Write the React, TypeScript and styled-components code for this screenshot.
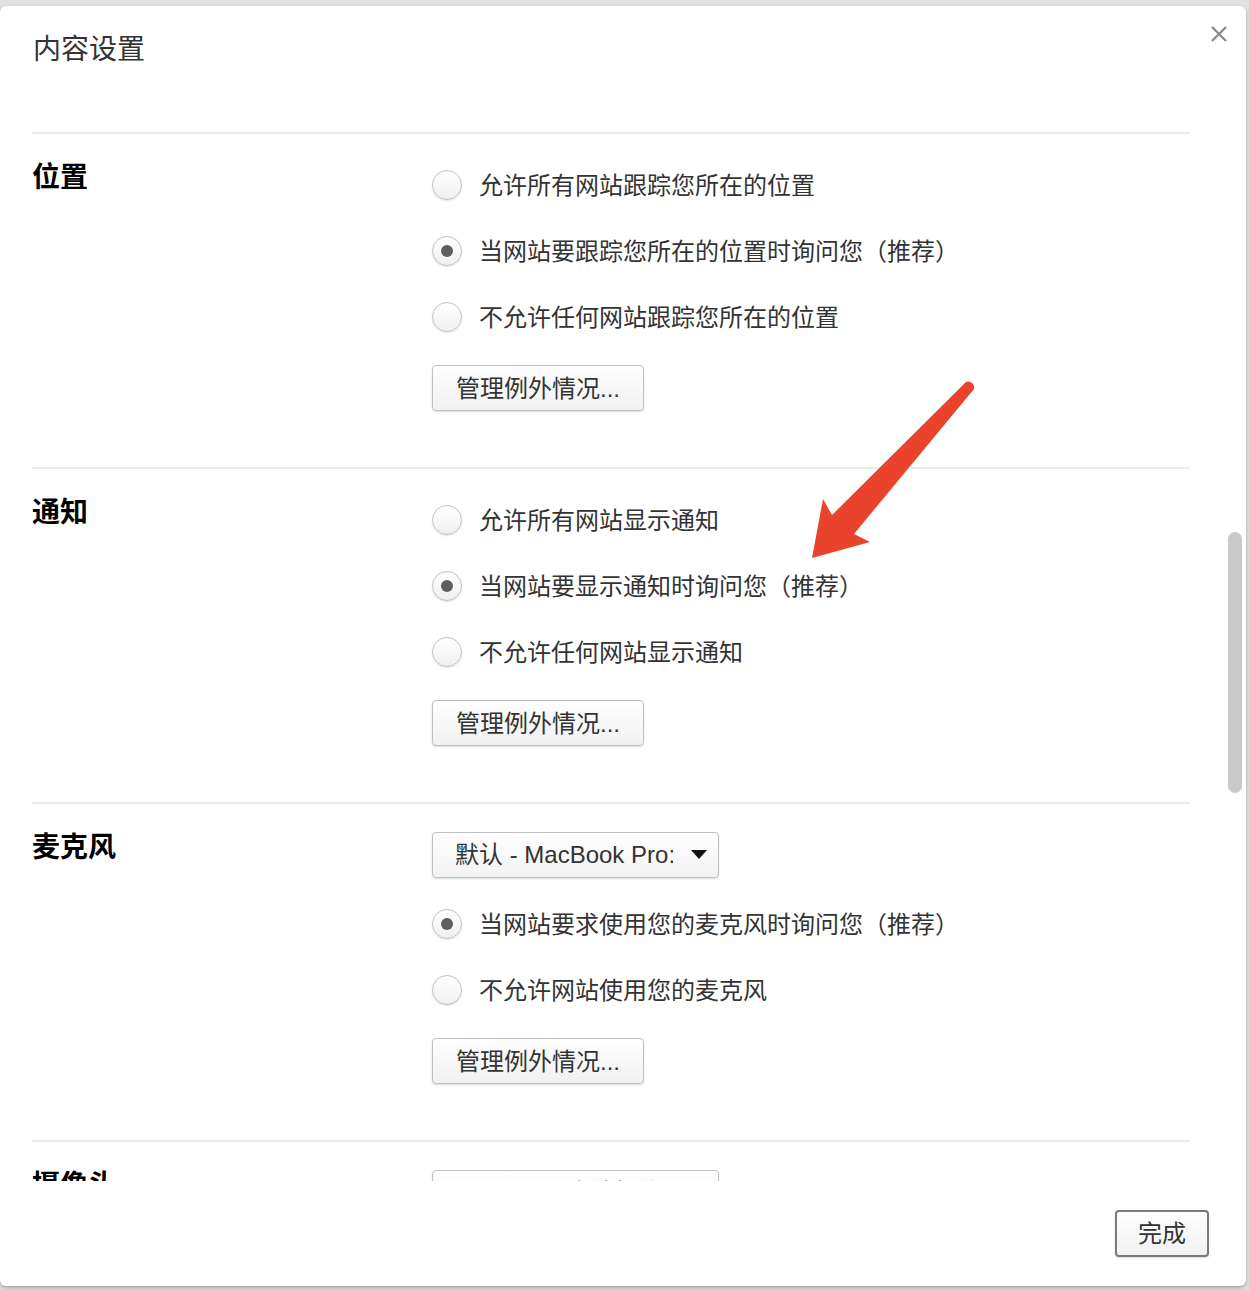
import styled, { createGlobalStyle } from 'styled-components';

// Page-wide reset: grey backdrop behind the dialog, CJK-capable font stack
const GlobalStyle = createGlobalStyle`
  html, body {
    margin: 0;
    padding: 0;
    background: #e2e2e2;
  }
  body {
    font-family: "Liberation Sans", "Noto Sans CJK SC", sans-serif;
    color: #333;
  }
`;

// Outer page wrapper
const Page = styled.div`
  position: relative;
  width: 1250px;
  height: 1290px;
  padding-top: 6px;
  box-sizing: border-box;
  overflow: hidden;
  border-right: 1px solid #d0d0d0;
`;

// The white settings dialog
const Dialog = styled.div`
  position: relative;
  width: 1246px;
  height: 1280px;
  background: #fff;
  border-radius: 6px;
  box-shadow: 0 2px 4px rgba(0, 0, 0, 0.28);
  display: flex;
  flex-direction: column;
`;

// Header row with title and close button
const Header = styled.div`
  height: 90px;
  flex: none;
  box-sizing: border-box;
  padding: 20px 18px 0 33px;
  display: flex;
  justify-content: space-between;
  align-items: flex-start;
`;

const Title = styled.h1`
  margin: 10px 0 0;
  font-size: 28px;
  line-height: 28px;
  font-weight: normal;
  color: #333;
`;

const CloseButton = styled.button`
  margin-top: -1px;
  padding: 0;
  width: 18px;
  height: 18px;
  border: none;
  background: none;
  display: flex;
  cursor: pointer;
`;

// Scrollable content area (clipped)
const Content = styled.div`
  height: 1085px;
  flex: none;
  overflow: hidden;
  box-sizing: border-box;
  padding: 36px 56px 0 32px;
`;

// Fake overlay scrollbar thumb
const ScrollThumb = styled.div`
  position: absolute;
  right: 4px;
  top: 526px;
  width: 14px;
  height: 261px;
  border-radius: 7px;
  background: #c9c9c9;
`;

// One settings section: label column + controls column
const Section = styled.section`
  display: grid;
  grid-template-columns: 400px 1fr;
  border-top: 2px solid #ececec;
  padding-bottom: 56px;
`;

const SectionLabel = styled.h2`
  margin: 0;
  padding-top: 26px;
  font-size: 28px;
  line-height: 36px;
  font-weight: bold;
  color: #000;
`;

const Controls = styled.div`
  padding-top: 33px;
  display: flex;
  flex-direction: column;
  align-items: flex-start;
  gap: 30px;
`;

// Radio option row
const RadioRow = styled.label`
  height: 36px;
  display: flex;
  align-items: center;
  gap: 17px;
  font-size: 24px;
  color: #333;
  white-space: nowrap;
`;

const RadioText = styled.span`
  padding-bottom: 4px;
`;

const RadioCircle = styled.span<{ $checked?: boolean }>`
  width: 30px;
  height: 30px;
  box-sizing: border-box;
  border-radius: 50%;
  border: 1px solid #c2c2c2;
  background: linear-gradient(#ffffff, #f0f0f0);
  box-shadow: 0 1px 2px rgba(0, 0, 0, 0.12);
  display: flex;
  align-items: center;
  justify-content: center;
  flex: none;

  &::after {
    content: '';
    display: ${(p) => (p.$checked ? 'block' : 'none')};
    width: 12px;
    height: 12px;
    border-radius: 50%;
    background: #5e5e5e;
  }
`;

// Grey push button ("管理例外情况...", "完成")
const PushButton = styled.button<{ $primary?: boolean }>`
  height: ${(p) => (p.$primary ? '47px' : '46px')};
  padding: 0 ${(p) => (p.$primary ? '21px' : '23px')} 4px;
  font-family: "Liberation Sans", "Noto Sans CJK SC", sans-serif;
  font-size: 24px;
  color: #333;
  border: ${(p) => (p.$primary ? '2px solid #7a7a7a' : '1px solid #bfbfbf')};
  border-radius: 4px;
  background: linear-gradient(#fefefe, #f1f1f1);
  box-shadow: 0 1px 2px rgba(0, 0, 0, 0.14);
  white-space: nowrap;
`;

// Device select
const Select = styled.div`
  width: 287px;
  height: 46px;
  box-sizing: border-box;
  margin: -5px 0 -2px;
  padding-left: 22px;
  border: 1px solid #c0c0c0;
  border-radius: 4px;
  background: linear-gradient(#fefefe, #f3f3f3);
  box-shadow: 0 1px 2px rgba(0, 0, 0, 0.14);
  display: flex;
  align-items: center;
  font-size: 24px;
  color: #333;
`;

const SelectText = styled.span`
  width: 218px;
  padding-bottom: 6px;
  overflow: hidden;
  white-space: nowrap;
`;

const SelectArrow = styled.span`
  margin: -2px 0 0 18px;
  width: 0;
  height: 0;
  border-left: 8px solid transparent;
  border-right: 8px solid transparent;
  border-top: 9px solid #111;
`;

// Footer with the done button
const Footer = styled.div`
  flex: 1;
  display: flex;
  justify-content: flex-end;
  align-items: flex-start;
  padding: 29px 37px 0 0;
`;

// Red annotation arrow drawn over the page
const Annotation = styled.svg`
  position: absolute;
  left: 806px;
  top: 376px;
  pointer-events: none;
`;

type Option = { text: string; checked?: boolean };

const sections: { label: string; select?: string; options: Option[]; manage: boolean }[] = [
  {
    label: '位置',
    options: [
      { text: '允许所有网站跟踪您所在的位置' },
      { text: '当网站要跟踪您所在的位置时询问您（推荐）', checked: true },
      { text: '不允许任何网站跟踪您所在的位置' },
    ],
    manage: true,
  },
  {
    label: '通知',
    options: [
      { text: '允许所有网站显示通知' },
      { text: '当网站要显示通知时询问您（推荐）', checked: true },
      { text: '不允许任何网站显示通知' },
    ],
    manage: true,
  },
  {
    label: '麦克风',
    select: '默认 - MacBook Pro: 内置麦克风',
    options: [
      { text: '当网站要求使用您的麦克风时询问您（推荐）', checked: true },
      { text: '不允许网站使用您的麦克风' },
    ],
    manage: true,
  },
  {
    label: '摄像头',
    select: 'FaceTime 高清摄像头（内建）',
    options: [
      { text: '当网站要求使用您的摄像头时询问您（推荐）', checked: true },
      { text: '不允许网站使用您的摄像头' },
    ],
    manage: true,
  },
];

const App = () => {
  return (
    <>
      <GlobalStyle />
      <Page>
        <Dialog>
          <Header>
            <Title>内容设置</Title>
            <CloseButton aria-label="关闭">
              <svg width="18" height="18" viewBox="0 0 18 18">
                <path d="M2 2 L16 16 M16 2 L2 16" stroke="#8c8c8c" strokeWidth="2.4" />
              </svg>
            </CloseButton>
          </Header>

          <Content>
            {sections.map((s) => (
              <Section key={s.label}>
                <SectionLabel>{s.label}</SectionLabel>
                <Controls>
                  {s.select && (
                    <Select>
                      <SelectText>{s.select}</SelectText>
                      <SelectArrow />
                    </Select>
                  )}
                  {s.options.map((o) => (
                    <RadioRow key={o.text}>
                      <RadioCircle $checked={o.checked} />
                      <RadioText>{o.text}</RadioText>
                    </RadioRow>
                  ))}
                  {s.manage && <PushButton>管理例外情况...</PushButton>}
                </Controls>
              </Section>
            ))}
          </Content>

          <Footer>
            <PushButton $primary>完成</PushButton>
          </Footer>

          <ScrollThumb />
        </Dialog>

        <Annotation width="176" height="190" viewBox="806 376 176 190">
          <path
            d="M823 499 L832 515 L966 382 A6 6 0 0 1 974 389 L854 534 L870 542 L812 558 Z"
            fill="#e9432b"
          />
        </Annotation>
      </Page>
    </>
  );
};

export default App;
